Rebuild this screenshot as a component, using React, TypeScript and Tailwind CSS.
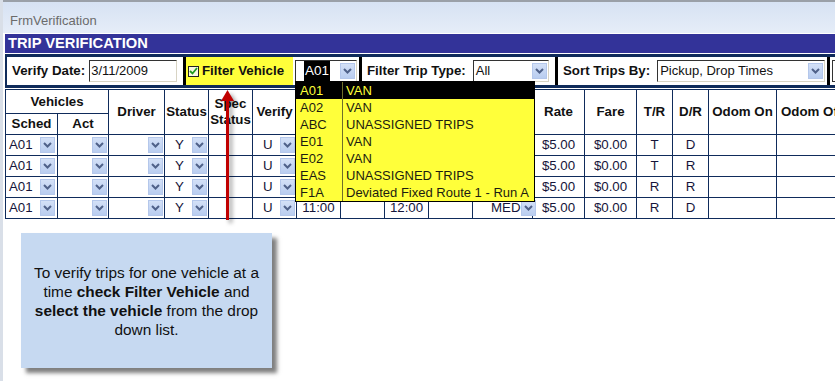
import React from 'react';

const rows = [
    { sched: 'A01', status: 'Y', verify: 'U', pu: '', drop: '', type: '', rate: '$5.00', fare: '$0.00', tr: 'T', dr: 'D' },
    { sched: 'A01', status: 'Y', verify: 'U', pu: '', drop: '', type: '', rate: '$5.00', fare: '$0.00', tr: 'T', dr: 'R' },
    { sched: 'A01', status: 'Y', verify: 'U', pu: '', drop: '', type: '', rate: '$5.00', fare: '$0.00', tr: 'R', dr: 'R' },
    { sched: 'A01', status: 'Y', verify: 'U', pu: '11:00', drop: '12:00', type: 'MED', rate: '$5.00', fare: '$0.00', tr: 'R', dr: 'D' },
];

const vehicles = [
    { code: 'A01', desc: 'VAN' },
    { code: 'A02', desc: 'VAN' },
    { code: 'ABC', desc: 'UNASSIGNED TRIPS' },
    { code: 'E01', desc: 'VAN' },
    { code: 'E02', desc: 'VAN' },
    { code: 'EAS', desc: 'UNASSIGNED TRIPS' },
    { code: 'F1A', desc: 'Deviated Fixed Route 1 - Run A' },
];

const colWidths = [52, 51, 56, 44, 44, 44, 44, 44, 44, 44, 60, 52, 52, 36, 36, 68, 68];

function Chevron() {
    return (
        <svg width="9" height="6" viewBox="0 0 9 6">
            <path d="M1 1L4.5 4.5L8 1" fill="none" stroke="#4f6189" strokeWidth="2" />
        </svg>
    );
}

function DropBtn({ className = '' }: { className?: string }) {
    return (
        <span className={`flex h-[16px] w-[15px] shrink-0 items-center justify-center border border-[#b4c7eb] bg-linear-to-b from-[#d3e0f7] to-[#b9cdf0] ${className}`}>
            <Chevron />
        </span>
    );
}

function Combo({ width, children }: { width: string; children?: React.ReactNode }) {
    return (
        <div className={`flex h-[22px] shrink-0 ${width} items-center justify-between border border-t-[#333] border-l-[#333] border-r-[#d8d4c4] border-b-[#d8d4c4] bg-white pl-[2px] pr-[1px] font-normal`}>
            <span className="whitespace-nowrap text-[13px] text-[#111]">{children}</span>
            <DropBtn />
        </div>
    );
}

function Sep() {
    return <div className="w-[3px] shrink-0 self-stretch bg-black" />;
}

const cell = 'border border-[#0f2b5b] p-0';

export default function App() {
    return (
        <div className="relative h-[381px] w-[835px] overflow-hidden border-l-[3px] border-[#d9dfe8] bg-white font-['Liberation_Sans',Arial,sans-serif] text-[#111]">
            {/* Window title */}
            <div className="h-[33px] border-t-2 border-[#9aa0a8] bg-linear-to-b from-[#d6e2f3] to-[#e6edf8] pl-[7px] pt-[9px] text-[13px] text-[#6b6b6b]">
                FrmVerification
            </div>

            <div className="pl-[2px]">
                {/* Header bar */}
                <div className="mt-[1px] flex h-[19px] items-center bg-[#333399] pl-[3px] text-[14.7px] font-bold text-white">
                    TRIP VERIFICATION
                </div>

                {/* Filter toolbar */}
                <div className="mt-[1px] flex h-[34px] items-stretch whitespace-nowrap border-y-[3px] border-l-2 border-[#0f2b5b] text-[13.3px] font-bold">
                    <div className="flex w-[176px] shrink-0 items-center pl-[5px]">
                        <span>Verify Date:</span>
                        <div className="ml-[4px] flex h-[22px] w-[88px] shrink-0 items-center border border-t-[#333] border-l-[#333] border-r-[#d8d4c4] border-b-[#d8d4c4] pl-[1px] text-[13px] font-normal">
                            3/11/2009
                        </div>
                    </div>
                    <Sep />
                    <div className="flex w-[107px] shrink-0 items-center bg-[#ffff3a] pl-[2px]">
                        <span className="flex h-[11px] w-[11px] items-center justify-center border border-[#222] bg-[#f7f7e0]">
                            <svg width="9" height="8" viewBox="0 0 9 8">
                                <path d="M1 4L3.5 6.5L8 1" fill="none" stroke="#1f9a1f" strokeWidth="1.8" />
                            </svg>
                        </span>
                        <span className="ml-[3px]">Filter Vehicle</span>
                    </div>
                    <div className="flex w-[66px] shrink-0 items-center pl-[2px]">
                        <div className="flex h-[22px] w-[62px] items-center justify-between border border-t-[#333] border-l-[#333] border-r-[#d8d4c4] border-b-[#d8d4c4] pl-[8px] pr-[1px]">
                            <span className="bg-black px-[1px] text-[13.5px] font-normal text-white">A01</span>
                            <DropBtn />
                        </div>
                    </div>
                    <Sep />
                    <div className="flex w-[193px] shrink-0 items-center pl-[5px]">
                        <span>Filter Trip Type:</span>
                        <div className="ml-[7px]">
                            <Combo width="w-[76px]">All</Combo>
                        </div>
                    </div>
                    <Sep />
                    <div className="flex w-[269px] shrink-0 items-center pl-[5px]">
                        <span>Sort Trips By:</span>
                        <div className="ml-[7px]">
                            <Combo width="w-[168px]">Pickup, Drop Times</Combo>
                        </div>
                    </div>
                    <Sep />
                    <div className="flex items-center pl-[2px]">
                        <div className="h-[22px] w-[40px] border border-[#333] bg-white" />
                    </div>
                </div>

                {/* Trip grid */}
                <table className="mt-[1px] table-fixed border-collapse text-[13.3px]" style={{ width: colWidths.reduce((a, b) => a + b, 0) }}>
                    <colgroup>
                        {colWidths.map((w, i) => (
                            <col key={i} style={{ width: w }} />
                        ))}
                    </colgroup>
                    <thead className="font-bold">
                        <tr className="h-[24px]">
                            <th colSpan={2} className={cell}>Vehicles</th>
                            <th rowSpan={2} className={cell}>Driver</th>
                            <th rowSpan={2} className={cell}>Status</th>
                            <th rowSpan={2} className={`${cell} leading-[16px]`}>Spec<br />Status</th>
                            <th rowSpan={2} className={cell}>Verify</th>
                            <th rowSpan={2} className={cell} />
                            <th rowSpan={2} className={cell} />
                            <th rowSpan={2} className={cell} />
                            <th rowSpan={2} className={cell} />
                            <th rowSpan={2} className={cell} />
                            <th rowSpan={2} className={cell}>Rate</th>
                            <th rowSpan={2} className={cell}>Fare</th>
                            <th rowSpan={2} className={cell}>T/R</th>
                            <th rowSpan={2} className={cell}>D/R</th>
                            <th rowSpan={2} className={`${cell} whitespace-nowrap`}>Odom On</th>
                            <th rowSpan={2} className={`${cell} whitespace-nowrap pl-[4px] text-left`}>Odom Off</th>
                        </tr>
                        <tr className="h-[20px]">
                            <th className={cell}>Sched</th>
                            <th className={cell}>Act</th>
                        </tr>
                    </thead>
                    <tbody className="text-[#15153a]">
                        {rows.map((r, i) => (
                            <tr key={i} className="h-[20px]">
                                <td className={cell}>
                                    <div className="flex items-center justify-between pl-[3px] pr-[2px]">
                                        <span>{r.sched}</span>
                                        <DropBtn />
                                    </div>
                                </td>
                                <td className={cell}>
                                    <div className="flex justify-end pr-[1px]"><DropBtn /></div>
                                </td>
                                <td className={cell}>
                                    <div className="flex justify-end pr-[1px]"><DropBtn /></div>
                                </td>
                                <td className={cell}>
                                    <div className="flex items-center justify-between pl-[10px] pr-[1px]">
                                        <span>{r.status}</span>
                                        <DropBtn />
                                    </div>
                                </td>
                                <td className={cell} />
                                <td className={cell}>
                                    <div className="flex items-center justify-between pl-[10px] pr-[1px]">
                                        <span>{r.verify}</span>
                                        <DropBtn />
                                    </div>
                                </td>
                                <td className={`${cell} text-center`}>{r.pu}</td>
                                <td className={cell} />
                                <td className={`${cell} text-center`}>{r.drop}</td>
                                <td className={cell} />
                                <td className={cell}>
                                    <div className="flex items-center justify-between pl-[18px] pr-[1px]">
                                        <span>{r.type}</span>
                                        <DropBtn />
                                    </div>
                                </td>
                                <td className={`${cell} text-center`}>{r.rate}</td>
                                <td className={`${cell} text-center`}>{r.fare}</td>
                                <td className={`${cell} text-center`}>{r.tr}</td>
                                <td className={`${cell} text-center`}>{r.dr}</td>
                                <td className={cell} />
                                <td className={cell} />
                            </tr>
                        ))}
                    </tbody>
                </table>
            </div>

            {/* Open vehicle drop down list */}
            <div className="absolute left-[292px] top-[81px] w-[240px] border border-black bg-[#ffff3a] text-[13px] leading-[17px] text-[#1c1c10]">
                {vehicles.map((v, i) => (
                    <div key={v.code} className={`flex h-[17px] ${i === 0 ? 'bg-black text-[#ffff3a]' : ''}`}>
                        <span className="w-[47px] border-r border-[#6f6f2a] pl-[4px]">{v.code}</span>
                        <span className="whitespace-nowrap pl-[3px]">{v.desc}</span>
                    </div>
                ))}
            </div>

            {/* Red arrow */}
            <svg className="absolute left-[210px] top-[88px] drop-shadow-[3px_3px_2px_rgba(0,0,0,0.4)]" width="30" height="140" viewBox="0 0 30 140">
                <path d="M13 12 L16 12 L16 132 L13 132 Z" fill="#c00000" />
                <path d="M14.5 2 L21 13 L8 13 Z" fill="#c00000" />
            </svg>

            {/* Callout */}
            <div className="absolute left-[18px] top-[233px] flex h-[135px] w-[251px] items-center justify-center bg-[#c6d9f1] px-[8px] text-center text-[15.4px] leading-[19px] text-[#111] shadow-[5px_5px_4px_rgba(0,0,0,0.5)]">
                <p>
                    To verify trips for one vehicle at a time <b>check Filter Vehicle</b> and <b>select the vehicle</b> from the drop down list.
                </p>
            </div>
        </div>
    );
}
